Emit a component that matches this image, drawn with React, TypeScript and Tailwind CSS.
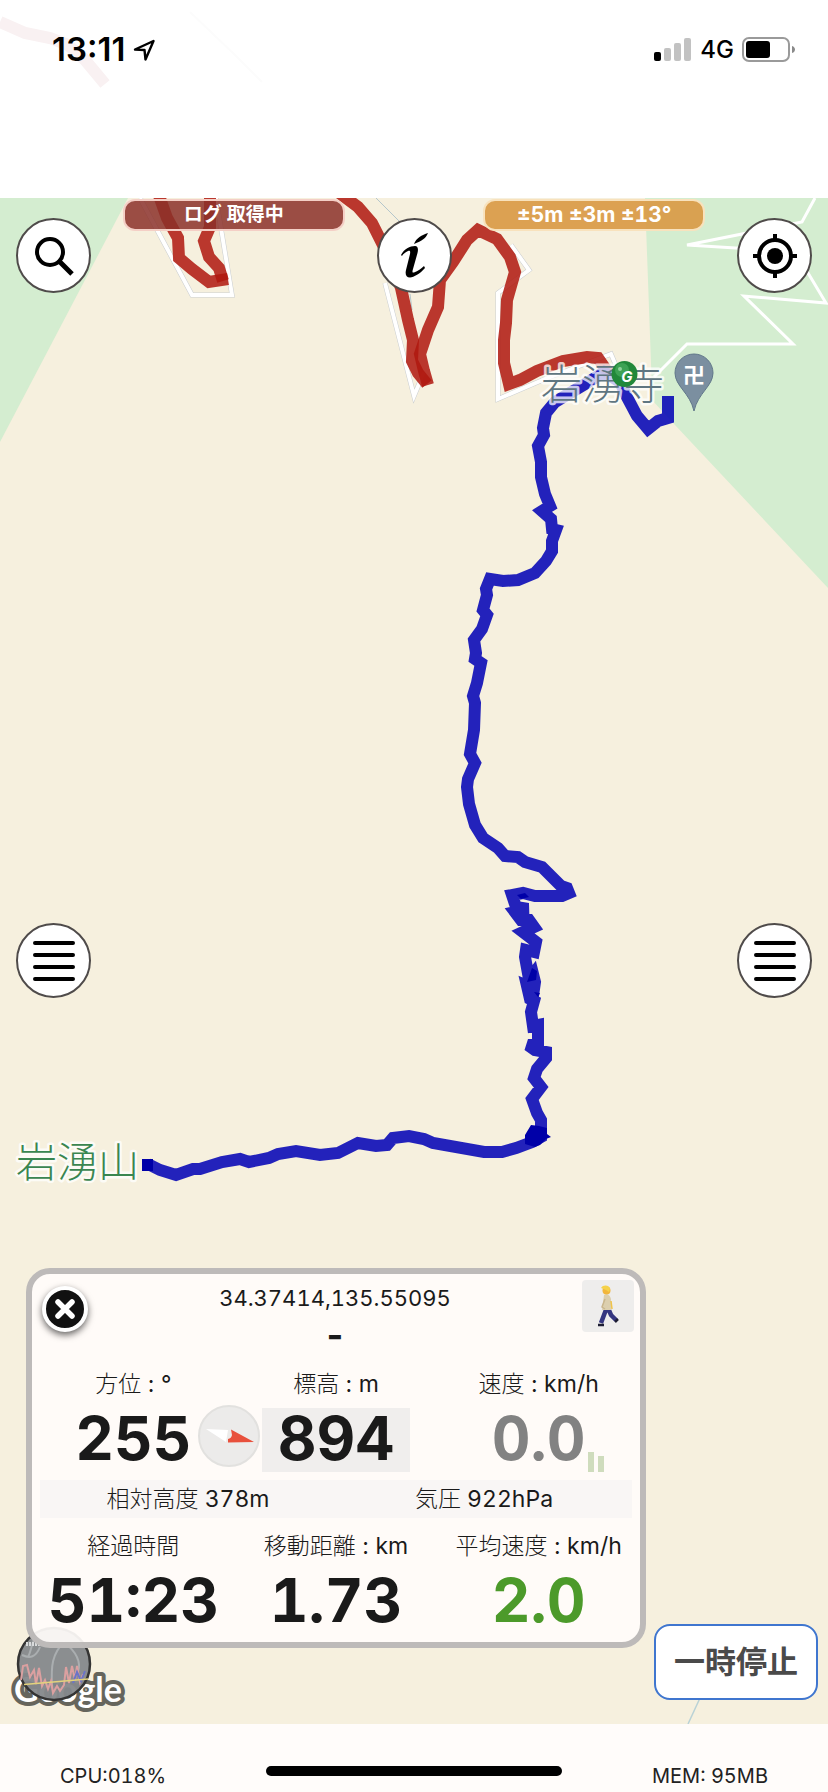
/**
 * Hiking log screen: status bar, map with recorded tracks, and the live stats panel.
 */
import type { ReactNode } from "react";

const RED_TRACKS = [
  "157,190 167,218 178,238 179,258 192,269 209,282 228,279",
  "210,190 210,227 204,241 209,257 219,268 223,281",
  "338,192 358,207 372,223 383,245 393,266 401,288 408,320 413,340 412,361 418,373 427,384",
  "428,385 424,371 420,354 428,330 438,307 440,280 453,262 467,240 478,230 497,239 510,257 515,272 507,300 506,323 504,340 504,363 509,384 520,380 537,371 563,361 587,357 598,358 609,374",
];

const BLUE_TRACK =
  "668,396 668,418 658,421 648,429 637,416 627,397 620,382 604,372 587,383 570,393 555,402 546,413 543,428 544,435 538,446 541,462 541,477 545,494 550,506 542,511 551,519 552,529 556,530 552,541 552,551 546,561 535,573 518,580 503,581 490,579 486,589 487,595 483,610 487,615 482,629 474,640 476,653 475,659 481,663 477,683 473,696 475,703 474,730 470,754 475,763 468,779 467,787 469,804 475,825 483,838 498,848 505,856 518,857 525,862 542,867 561,886 567,888 569,893 562,896 535,896 523,893 512,895 516,907 528,909 515,912 521,920 529,920 534,927 523,932 536,942 534,952 526,950 525,957 529,979 533,974 535,982 534,989 527,986 530,999 534,1001 531,1012 533,1026 538,1025 538,1045 528,1045 535,1050 546,1052 546,1058 537,1069 534,1078 541,1087 532,1099 537,1113 541,1120 541,1137 532,1142 516,1148 502,1152 484,1152 433,1143 424,1139 409,1136 393,1138 387,1145 376,1146 358,1143 338,1153 320,1155 296,1151 278,1154 269,1158 249,1162 240,1159 222,1162 200,1169 193,1169 176,1175 160,1170 148,1164";

const SANS = '"Noto Sans CJK JP", sans-serif';

function MapCanvas() {
  return (
    <svg
      className="absolute inset-0 h-full w-full"
      viewBox="0 198 828 1526"
      preserveAspectRatio="xMidYMin slice"
      fill="none"
      aria-hidden="true"
    >
      <rect y="198" width="828" height="1526" fill="#f6f0de" />
      <path d="M0 198H128L0 442z" fill="#d4edd0" />
      <path d="M645 198H828V588L675 425 652 400 651 363z" fill="#d4edd0" />

      {/* roads */}
      <path
        d="M815 198L802 222 687 245 770 250 805 268 826 303 744 296 793 344H687L654 377"
        stroke="#fff"
        strokeWidth="3"
      />
      {[
        "M140 198L192 295H232L216 198",
        "M385 283L414 396 424 372",
        "M511 245L529 270 498 293V399L545 379 611 354 617 368",
      ].map((d) => (
        <g key={d}>
          <path d={d} stroke="#c9cdd0" strokeWidth="5" />
          <path d={d} stroke="#fff" strokeWidth="4" />
        </g>
      ))}
      <path d="M376 198L400 222M410 294L412 310" stroke="#b4c6cb" />
      <path d="M700 1698L688 1724" stroke="#b9d2d6" strokeWidth="1.5" />

      {RED_TRACKS.map((points) => (
        <polyline
          key={points}
          points={points}
          stroke="#b0180f"
          strokeOpacity="0.86"
          strokeWidth="12"
        />
      ))}
      <polyline
        points={BLUE_TRACK}
        stroke="#0000b4"
        strokeOpacity="0.86"
        strokeWidth="12"
        strokeMiterlimit="3"
      />
      <path d="M531 1125l8 1 8 2v6l4 3-5 2-6 6-5 2-10-3v-9z" fill="#0000a8" />
      <path d="M142 1159h11v12h-11z" fill="#0000a8" />
      <path d="M532 968l5 3-1 9-9 2zM534 992l6 1-2 4z" fill="#0000a8" />
      <path d="M517 895l8-2 4 4-8 2z" fill="#0000a8" />

      {/* place names */}
      <g
        fontFamily={SANS}
        fontSize="41"
        fontWeight="300"
        stroke="#fff"
        strokeWidth="5"
        strokeOpacity="0.75"
        strokeLinejoin="round"
        paintOrder="stroke"
      >
        <text x="541" y="399" fill="#5f7681">
          岩湧寺
        </text>
        <text x="16" y="1177" fill="#3a8650">
          岩湧山
        </text>
      </g>

      <path
        d="M694 411c-4-18-19-25-19-38a19 19 0 0138 0c0 13-15 20-19 38z"
        fill="#7b8fa0"
        stroke="#62788a"
      />
      <text
        x="694"
        y="383"
        textAnchor="middle"
        fontFamily={SANS}
        fontSize="22"
        fontWeight="700"
        fill="#fff"
      >
        卍
      </text>

      <circle cx="624.5" cy="374" r="13" fill="#22883a" />
      <circle cx="622" cy="370" r="7" fill="#3da254" />
      <circle cx="620" cy="369" r="2" fill="#8fd09b" />
      <text
        x="627"
        y="382"
        textAnchor="middle"
        fontFamily="Inter, sans-serif"
        fontSize="15"
        fontStyle="italic"
        fontWeight="700"
        fill="#fff"
      >
        G
      </text>
    </svg>
  );
}

function RoundButton({
  label,
  children,
}: {
  label: string;
  children: ReactNode;
}) {
  return (
    <button
      type="button"
      aria-label={label}
      className="flex h-[75px] w-[75px] shrink-0 items-center justify-center rounded-full border-2 border-[#4f4b4a] bg-white text-black"
    >
      {children}
    </button>
  );
}

function MenuIcon() {
  return (
    <svg
      width="42"
      height="40"
      viewBox="0 0 42 40"
      stroke="currentColor"
      strokeWidth="4"
      strokeLinecap="round"
    >
      <path d="M2 2h38M2 14h38M2 26h38M2 38h38" />
    </svg>
  );
}

function StatusBar() {
  return (
    <header className="relative flex h-[198px] items-start justify-between bg-white pt-8 pr-8 pl-[52px] text-black">
      <svg
        className="absolute top-0 left-0"
        width="320"
        height="198"
        fill="none"
        aria-hidden="true"
      >
        <path
          d="M0 22L25 33 50 38 68 45 85 60 105 84"
          stroke="#f9f1f2"
          strokeWidth="12"
        />
        <path d="M190 12L235 55 262 82" stroke="#fcfcfc" strokeWidth="2" />
      </svg>
      <div className="relative flex h-9 items-center gap-2">
        <span className="text-[33px] font-semibold">13:11</span>
        <svg
          width="23"
          height="23"
          viewBox="0 0 23 23"
          fill="none"
          stroke="currentColor"
          strokeWidth="2.4"
          strokeLinejoin="round"
        >
          <path d="M2 10.5L20.500 2 12.500 20.500 11.500 11z" />
        </svg>
      </div>
      <div className="flex h-9 items-center gap-2">
        <svg width="38" height="24" viewBox="0 0 38 24" fill="#c2c2c2">
          <rect y="14" width="7" height="9" rx="2" fill="#000" />
          <rect x="10" y="10" width="7" height="13" rx="2" />
          <rect x="20" y="5" width="7" height="18" rx="2" />
          <rect x="30" width="7" height="23" rx="2" />
        </svg>
        <span className="text-[24px] font-medium">4G</span>
        <svg width="54" height="26" viewBox="0 0 54 26" fill="none">
          <rect
            x="1"
            y="1"
            width="46"
            height="23"
            rx="6"
            stroke="#9a9a9a"
            strokeWidth="2"
          />
          <rect x="4" y="4" width="24" height="17" rx="3" fill="#000" />
          <path d="M50 9c4 1 4 6 0 7z" fill="#8a8a8a" />
        </svg>
      </div>
    </header>
  );
}

function StatusPill({
  className,
  children,
}: {
  className: string;
  children: ReactNode;
}) {
  return (
    <span
      className={`mt-px flex h-8 w-[222px] items-center justify-center rounded-xl border-2 font-bold text-white tabular-nums ${className}`}
    >
      {children}
    </span>
  );
}

function Stat({
  label,
  unit,
  value,
  className = "text-[#1a1a1a]",
  boxClassName = "",
}: {
  label: string;
  unit?: string;
  value: string;
  className?: string;
  boxClassName?: string;
}) {
  return (
    <div className="flex flex-col items-center">
      <dt className="text-[23px] leading-8 font-light whitespace-nowrap">
        {label}
        {unit && <span className="font-normal"> : {unit}</span>}
      </dt>
      <dd
        className={`mt-2 flex h-16 w-[148px] items-center justify-center pb-1 text-[60px] font-bold tabular-nums ${boxClassName} ${className}`}
      >
        {value}
      </dd>
    </div>
  );
}

function Compass() {
  return (
    <svg
      className="absolute top-9 left-[165px]"
      width="64"
      height="64"
      viewBox="0 0 64 64"
      aria-hidden="true"
    >
      <circle cx="32" cy="32" r="30" fill="#ecebea" stroke="#e2e1df" strokeWidth="2" />
      <path d="M9 25L31 26 29 38z" fill="#fff" />
      <path d="M34 25.500L57 38 31 38.500 31 35A5 5 0 0035 31z" fill="#e8503c" />
    </svg>
  );
}

function Walker() {
  return (
    <svg width="24" height="42" viewBox="0 0 24 42" fill="none">
      <path
        d="M11 22L8 30 5 38M12 23L15 30 20 35"
        stroke="#34357f"
        strokeWidth="4.500"
      />
      <path d="M2 40h6M19 37l3-3" stroke="#1d1d33" strokeWidth="2.500" />
      <path d="M8 10c3-2 6 0 7 4v11H6z" fill="#dccfae" />
      <path d="M9 14L6 22 9 24" stroke="#c9b68d" strokeWidth="1.500" />
      <path d="M15 16l1 8" stroke="#f0c34a" strokeWidth="1.500" />
      <circle cx="10.500" cy="5.500" r="4" fill="#f2b63c" />
      <path d="M5 3c2-4 9-3 9 1l-1 3-3-2z" fill="#f5d24a" />
    </svg>
  );
}

function StatsPanel() {
  return (
    <section className="relative mb-[76px] ml-[26px] w-[620px] rounded-3xl border-[6px] border-[#b9b6b5]/95 bg-[#fffcfa]/93 pb-2 text-[#1a1a1a]">
      <div className="flex items-start justify-between pr-1.5 pl-2.5">
        <button
          type="button"
          aria-label="閉じる"
          className="mt-3 flex h-[46px] w-[46px] items-center justify-center rounded-full border-4 border-white bg-[#111] text-white shadow-[0_3px_7px_rgba(0,0,0,0.6)]"
        >
          <svg
            width="20"
            height="20"
            viewBox="0 0 20 20"
            stroke="currentColor"
            strokeWidth="5.500"
            strokeLinecap="round"
          >
            <path d="M3 3l14 14M17 3L3 17" />
          </svg>
        </button>
        <div className="flex flex-col items-center pt-2">
          <span className="text-[22px] leading-8 tabular-nums">
            34.37414,135.55095
          </span>
          <span className="text-[36px] leading-[42px] font-bold">-</span>
        </div>
        <button
          type="button"
          aria-label="徒歩"
          className="mt-1.5 flex h-[52px] w-[52px] items-center justify-center rounded bg-[#eeedec]"
        >
          <Walker />
        </button>
      </div>

      <dl className="relative mt-3 grid grid-cols-3">
        <Stat label="方位" unit="°" value="255" />
        <Stat label="標高" unit="m" value="894" boxClassName="bg-[#f0eeed]" />
        <Stat label="速度" unit="km/h" value="0.0" className="text-[#828282]" />
        <Compass />
        <div className="absolute right-9 bottom-0 flex items-end gap-1">
          <span className="h-5 w-1.5 bg-[#cfdcbd]" />
          <span className="h-4 w-1.5 bg-[#cfdcbd]" />
        </div>
      </dl>

      <div className="mx-2 mt-2 grid h-[38px] grid-cols-2 items-center bg-[#f9f6f5] text-center text-[23px] font-light tabular-nums">
        <span>
          相対高度<span className="font-normal"> 378m</span>
        </span>
        <span>
          気圧<span className="font-normal"> 922hPa</span>
        </span>
      </div>

      <dl className="mt-3 grid grid-cols-3">
        <Stat label="経過時間" value="51:23" />
        <Stat label="移動距離" unit="km" value="1.73" />
        <Stat
          label="平均速度"
          unit="km/h"
          value="2.0"
          className="text-[#4c9a2a]"
        />
      </dl>
    </section>
  );
}

function MapCorner() {
  return (
    <div className="absolute bottom-0 left-0">
      <svg width="140" height="110" viewBox="0 1614 140 110" fill="none">
        <text
          x="14"
          y="1702"
          fontFamily="Lato, sans-serif"
          fontSize="34"
          fontWeight="700"
          fill="#fff"
          stroke="#66655c"
          strokeWidth="8"
          strokeLinejoin="round"
          paintOrder="stroke"
        >
          Google
        </text>
        <circle
          cx="54"
          cy="1664"
          r="36"
          fill="#85888b"
          fillOpacity="0.95"
          stroke="#343434"
          strokeWidth="2.500"
        />
        <path
          d="M34 1640c-3 6-3 12-6 17M78 1672c4-12-4-22-14-30M52 1686c-1-20 0-32 12-44M22 1655c8 4 14 2 18-8"
          stroke="#aaaeb0"
          strokeWidth="2"
        />
        <path d="M26 1644h14" stroke="#d8dadb" strokeWidth="4" strokeDasharray="2 1" />
        <path
          d="M21 1680l2-14 4-1 3 12 4-7 2 14 3-16 3 18 3-6 3 9 3-8 2 12 4-7 3 5 4-6 2-18 3 16 3-17 3 14 2-14 3 16 3-8"
          stroke="#dba0a0"
          strokeWidth="2"
        />
        <path d="M73 1683l4-11 4 9 4-10" stroke="#6b74c8" strokeWidth="2" />
        <path d="M24 1684.500L88 1679" stroke="#e3d27c" strokeWidth="1.500" />
      </svg>
    </div>
  );
}

export default function App() {
  return (
    <div className="flex min-h-screen flex-col font-['Inter','Noto_Sans_CJK_JP',sans-serif]">
      <StatusBar />

      <main className="relative flex flex-1 flex-col overflow-hidden">
        <MapCanvas />
        <MapCorner />

        <div className="relative flex items-start justify-between px-4">
          <div className="mt-5">
            <RoundButton label="検索">
              <svg
                width="42"
                height="42"
                viewBox="0 0 42 42"
                fill="none"
                stroke="currentColor"
                strokeWidth="4"
              >
                <circle cx="17" cy="17" r="13" />
                <path d="M26 26l13 13" strokeWidth="5" />
              </svg>
            </RoundButton>
          </div>
          <StatusPill className="border-[#f4cfc6] bg-[#8b3029]/85 text-[19px]">
            ログ 取得中
          </StatusPill>
          <div className="mt-5">
            <RoundButton label="情報">
              <svg width="28" height="48" viewBox="0 0 28 48" fill="currentColor">
                <path d="M14 12C16 6 22 3 28 1 26 6 22 9 14 12z" />
                <path d="M1 23C4 17 10 14 15 14 18 14 18.500 17 17.500 21L13 37C12 40 12.500 41 14 40.500 18 39 21 37 24 34L25 36C20 42 14 45 10 45.500 6 45.500 5 42 6 38L10 22C10.500 19 10 18.500 8 19 5.500 20 3 22 2 24z" />
              </svg>
            </RoundButton>
          </div>
          <StatusPill className="border-[#f8e2bd] bg-[#d99a45]/92 text-[21px]">
            ±5m ±3m ±13°
          </StatusPill>
          <div className="mt-5">
            <RoundButton label="現在地">
              <svg
                width="44"
                height="44"
                viewBox="0 0 44 44"
                fill="none"
                stroke="currentColor"
                strokeWidth="4"
              >
                <circle cx="22" cy="22" r="16" />
                <circle cx="22" cy="22" r="8" fill="currentColor" stroke="none" />
                <path d="M22 0v8M22 36v8M0 22h8M36 22h8" />
              </svg>
            </RoundButton>
          </div>
        </div>

        <div className="flex-[7]" />
        <div className="relative flex justify-between px-4">
          <RoundButton label="左メニュー">
            <MenuIcon />
          </RoundButton>
          <RoundButton label="右メニュー">
            <MenuIcon />
          </RoundButton>
        </div>
        <div className="flex-[3]" />

        <div className="relative flex items-end justify-between pr-2.5">
          <StatsPanel />
          <button
            type="button"
            className="mb-6 flex h-[76px] w-[164px] items-center justify-center rounded-2xl border-2 border-[#3f76cf] bg-white text-[31px] font-bold text-[#4a4a4a]"
          >
            一時停止
          </button>
        </div>
      </main>

      <footer className="grid h-[68px] grid-cols-[1fr_296px_1fr] items-end bg-[#fffcfa] px-[60px] pb-0.5 text-[20px] leading-7 text-[#222] tabular-nums">
        <span>CPU:018%</span>
        <span className="mb-3.5 h-2.5 rounded-full bg-black" />
        <span className="text-right">MEM: 95MB</span>
      </footer>
    </div>
  );
}
